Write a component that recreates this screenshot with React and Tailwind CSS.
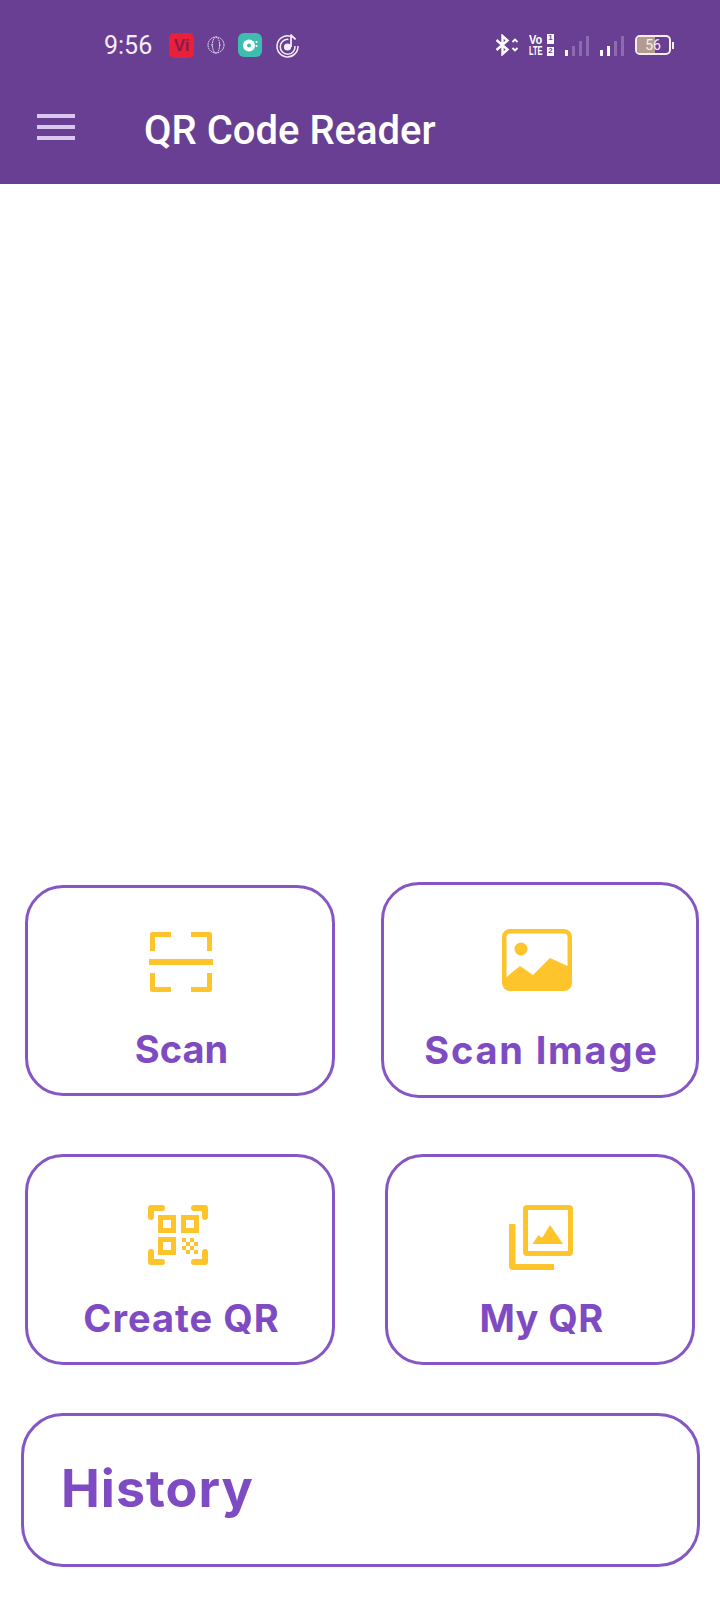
import React from "react";

const YELLOW = "#fdc42b";

function ViIcon() {
  return (
    <div className="w-[25px] h-[25px] rounded-[5px] bg-[#e8203a] flex items-center justify-center">
      <span className="font-['Liberation_Sans',sans-serif] font-bold text-[17px] leading-none text-[#8a1a4a]">
        Vi
      </span>
    </div>
  );
}

function GlobeIcon() {
  return (
    <svg width="18" height="18" viewBox="0 0 18 18" fill="none" stroke="#f1e8f8" strokeWidth="1" strokeDasharray="1.6 0.7">
      <circle cx="9" cy="9" r="8" />
      <ellipse cx="9" cy="9" rx="3.6" ry="8" />
      <path d="M4 9h2M12 9h2" />
    </svg>
  );
}

function DiscIcon() {
  return (
    <div className="w-[24px] h-[24px] rounded-[6px] bg-[#3dbdb0] flex items-center justify-center">
      <svg width="18" height="18" viewBox="0 0 18 18">
        <circle cx="8" cy="9.5" r="6" fill="#fff" />
        <circle cx="8" cy="9.5" r="2" fill="#3dbdb0" />
        <circle cx="15.5" cy="6" r="1" fill="#fff" />
        <circle cx="15.5" cy="10" r="1" fill="#fff" />
      </svg>
    </div>
  );
}

function MusicIcon() {
  return (
    <svg width="26" height="26" viewBox="0 0 26 26" fill="none" stroke="#f4edf9">
      <path d="M15 4.2A10.5 10.5 0 1 0 23 14" strokeWidth="1.5" />
      <path d="M13.500 7.400A7.400 7.400 0 1 0 20 14" strokeWidth="1.5" />
      <circle cx="12.500" cy="15" r="3.600" fill="#f4edf9" stroke="none" />
      <path d="M16 15V2.500c1 2.600 3.500 3 4.500 5" strokeWidth="1.8" />
    </svg>
  );
}

function BluetoothIcon() {
  return (
    <svg width="24" height="22" viewBox="0 0 24 22" fill="none" stroke="#fff" strokeWidth="2.4">
      <path d="M1.500 6l11 9.500L7.500 20V2l5 4.500L1.500 16" />
      <path d="M17.500 8l2.500-2.500L22.500 8M17.500 14l2.500 2.500 2.500-2.500" strokeWidth="1.800" />
    </svg>
  );
}

function VolteIcon() {
  return (
    <div className="w-[25px] flex flex-col font-['Liberation_Sans',sans-serif] font-bold text-white leading-none">
      <div className="flex items-center justify-between h-[11px]">
        <span className="w-[16px] text-[13px] scale-x-[0.85] origin-left">Vo</span>
        <span className="w-[7px] h-[10px] shrink-0 bg-white text-[#683f92] text-[8px] text-center">1</span>
      </div>
      <div className="flex items-center justify-between h-[11px] mt-[1px]">
        <span className="w-[16px] text-[12px] whitespace-nowrap scale-x-[0.62] origin-left">LTE</span>
        <span className="w-[7px] h-[9px] shrink-0 bg-white text-[#683f92] text-[8px] text-center">2</span>
      </div>
    </div>
  );
}

function SignalIcon({ active }) {
  const heights = [6, 10, 15, 20];
  return (
    <div className="flex items-end gap-[4px] h-[21px]">
      {heights.map((h, i) => (
        <div
          key={i}
          className={i < active ? "w-[3px] bg-white" : "w-[3px] bg-[#8c6bb0]"}
          style={{ height: h }}
        />
      ))}
    </div>
  );
}

function Battery() {
  return (
    <div className="flex items-center">
      <div className="relative w-[36px] h-[20px] rounded-[5px] border-2 border-[#f5eef0] overflow-hidden flex items-center justify-center">
        <div className="absolute left-0 top-0 bottom-0 w-[18px] bg-[#b39c8f]" />
        <span className="relative font-['Roboto',sans-serif] text-[14px] leading-none text-[#f5eef0]">56</span>
      </div>
      <div className="w-[2px] h-[7px] bg-[#f5eef0] ml-[1px]" />
    </div>
  );
}

function ScanIcon() {
  return (
    <svg width="64" height="60" viewBox="0 0 64 60" fill="none" stroke={YELLOW} strokeWidth="5" strokeLinejoin="round" strokeLinecap="butt">
      <path d="M22 2.500H3.500V19" />
      <path d="M42 2.500h18.500V19" />
      <path d="M3.500 41v16.500H22" />
      <path d="M60.500 41v16.500H42" />
      <path d="M0 30h64" strokeWidth="6" />
    </svg>
  );
}

function ImageIcon() {
  return (
    <svg width="70" height="62" viewBox="0 0 70 62">
      <path
        fillRule="evenodd"
        fill={YELLOW}
        d="M8 0h54a8 8 0 0 1 8 8v46a8 8 0 0 1-8 8H8a8 8 0 0 1-8-8V8a8 8 0 0 1 8-8zM4.500 48l13.500-11 13 9 17-17 17.500 8V8a3.500 3.500 0 0 0-3.500-3.500H8A3.500 3.500 0 0 0 4.500 8z"
      />
      <circle cx="19" cy="20" r="6.500" fill={YELLOW} />
    </svg>
  );
}

function QrIcon() {
  return (
    <svg width="60" height="60" viewBox="0 0 60 60" fill="none" stroke={YELLOW}>
      <g strokeWidth="6" strokeLinecap="round" strokeLinejoin="round">
        <path d="M14 3H3v9" />
        <path d="M46 3h11v9" />
        <path d="M3 47v10h11" />
        <path d="M57 47v10H46" />
      </g>
      <g strokeWidth="5">
        <rect x="12.500" y="12.500" width="13" height="13" />
        <rect x="35.500" y="12.500" width="13" height="13" />
        <rect x="12.500" y="34.500" width="13" height="13" />
      </g>
      <g fill={YELLOW} stroke="none">
        <rect x="34" y="33" width="4" height="4" />
        <rect x="42" y="33" width="4" height="4" />
        <rect x="38" y="37" width="4" height="4" />
        <rect x="46" y="37" width="4" height="4" />
        <rect x="34" y="41" width="4" height="4" />
        <rect x="42" y="41" width="4" height="4" />
        <rect x="38" y="45" width="4" height="4" />
        <rect x="46" y="45" width="4" height="4" />
      </g>
    </svg>
  );
}

function GalleryIcon() {
  return (
    <svg width="64" height="65" viewBox="0 0 64 65">
      <path
        fillRule="evenodd"
        fill={YELLOW}
        d="M18 0h42a4 4 0 0 1 4 4v43a4 4 0 0 1-4 4H18a4 4 0 0 1-4-4V4a4 4 0 0 1 4-4zM19 5v41h40V5z"
      />
      <path fill={YELLOW} d="M23.500 39l6-9 3.500 3 8-13 13 19z" />
      <path fill={YELLOW} d="M0 19h6.500v40H45v6H4a4 4 0 0 1-4-4z" />
    </svg>
  );
}

function ActionCard({ label, icon, className, iconClass, labelClass }) {
  return (
    <button className={`flex flex-col items-center border-[3px] border-[#8656c4] rounded-[38px] bg-white ${className}`}>
      <div className={`flex justify-center ${iconClass}`}>{icon}</div>
      <span className={`font-['Inter',sans-serif] font-bold text-[38px] leading-[44px] text-[#7f4bc3] ${labelClass}`}>
        {label}
      </span>
    </button>
  );
}

export default function App() {
  return (
    <div className="w-[720px] h-[1600px] bg-white flex flex-col overflow-hidden">
      <header className="bg-[#683f92] h-[184px]">
        <div className="h-[88px] flex items-center pl-[104px] pr-[46px] pt-[2px]">
          <span className="font-['Roboto',sans-serif] text-[25px] leading-none text-[#f5eefa]">9:56</span>
          <div className="flex items-center ml-[17px] gap-[13px]">
            <ViIcon />
            <GlobeIcon />
            <DiscIcon />
            <MusicIcon />
          </div>
          <div className="flex items-center ml-auto">
            <BluetoothIcon />
            <div className="ml-[10px]"><VolteIcon /></div>
            <div className="ml-[11px]"><SignalIcon active={1} /></div>
            <div className="ml-[11px]"><SignalIcon active={2} /></div>
            <div className="ml-[11px]"><Battery /></div>
          </div>
        </div>
        <div className="flex items-center h-[84px] pl-[37px]">
          <div className="flex flex-col gap-[7px] w-[38px] mb-[6px]">
            <div className="h-[4px] bg-[#dcc8ee]" />
            <div className="h-[4px] bg-[#dcc8ee]" />
            <div className="h-[4px] bg-[#dcc8ee]" />
          </div>
          <h1 className="ml-[69px] mt-[2px] font-['Roboto',sans-serif] font-medium text-[40px] leading-none text-white">
            QR Code Reader
          </h1>
        </div>
      </header>

      <main className="flex-1 flex flex-col justify-end pb-[33px]">
        <div className="flex items-center h-[216px] pl-[25px]">
          <ActionCard
            label="Scan"
            icon={<ScanIcon />}
            className="w-[310px] h-[211px]"
            iconClass="mt-[44px] ml-[2px]"
            labelClass="mt-[35px] ml-[3px]"
          />
          <ActionCard
            label="Scan Image"
            icon={<ImageIcon />}
            className="w-[318px] h-[216px] ml-[46px]"
            iconClass="mt-[44px] mr-[6px]"
            labelClass="mt-[37px] ml-[3px] tracking-[1.8px]"
          />
        </div>

        <div className="flex items-center mt-[56px] pl-[25px]">
          <ActionCard
            label="Create QR"
            icon={<QrIcon />}
            className="w-[310px] h-[211px]"
            iconClass="mt-[48px] mr-[4px]"
            labelClass="mt-[31px] ml-[3px] tracking-[1px]"
          />
          <ActionCard
            label="My QR"
            icon={<GalleryIcon />}
            className="w-[310px] h-[211px] ml-[50px]"
            iconClass="mt-[48px] ml-[2px]"
            labelClass="mt-[26px] ml-[3px] tracking-[0.4px]"
          />
        </div>

        <div className="mt-[48px] ml-[21px] w-[679px] h-[154px] border-[3px] border-[#8656c4] rounded-[42px] flex items-center pl-[37px]">
          <span className="font-['Inter',sans-serif] font-bold text-[52px] leading-none tracking-[1px] mb-[3px] text-[#7f4bc3]">History</span>
        </div>
      </main>
    </div>
  );
}
